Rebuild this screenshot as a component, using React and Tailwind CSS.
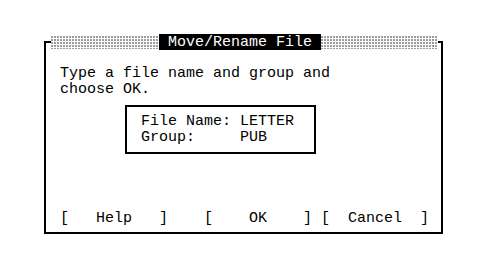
import React from "react";

const dither =
  "bg-[conic-gradient(at_2px_2px,#ffffff_75%,#9c9c9c_0)] bg-[length:3px_3px]";

export default function App() {
  return (
    <div className="w-[496px] h-[274px] bg-white text-black font-['Liberation_Mono',monospace] text-[15px] leading-[16px]">
      <div className="pt-[34px] pl-[44px]">
        <div className="w-[399px]">
          <div className="relative z-10 flex items-center h-[16px] pl-[7px] pr-[5px]">
            <div className={`w-[108px] h-[13px] ${dither}`} />
            <div className="w-[162px] h-[16px] pt-[1px] bg-black text-white whitespace-pre text-center leading-[15px]">
              Move/Rename File
            </div>
            <div className={`flex-1 h-[13px] ${dither}`} />
          </div>
          <div className="-mt-[9px] h-[193px] border-2 border-black flex flex-col pl-[14px]">
            <div className="mt-[23px]">
              <div>Type a file name and group and</div>
              <div>choose OK.</div>
            </div>
            <div className="ml-[65px] mt-[7px] w-[191px] h-[49px] border-2 border-black pl-[14px] pt-[7px] whitespace-pre">
              <div>File Name: LETTER</div>
              <div>Group:     PUB</div>
            </div>
            <div className="mt-[57px] whitespace-pre">
              {"[   Help   ]    [    OK    ] [  Cancel  ]"}
            </div>
          </div>
        </div>
      </div>
    </div>
  );
}
